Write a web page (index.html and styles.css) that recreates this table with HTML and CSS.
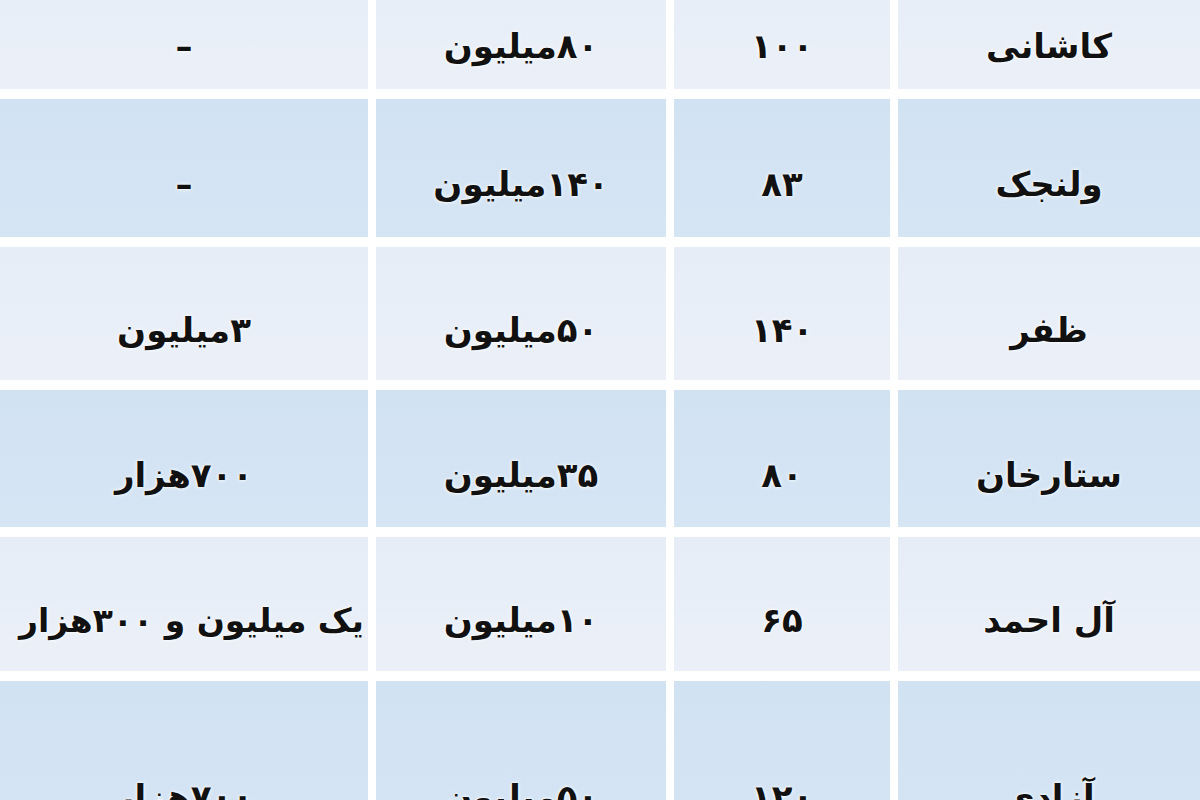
FILE: index.html
```html
<!DOCTYPE html>
<html lang="fa" dir="rtl">
<head>
<meta charset="utf-8">
<title>جدول</title>
<link rel="stylesheet" href="styles.css">
</head>
<body>
<div class="table">
  <div class="cell light r1">کاشانی</div>
  <div class="cell light r1">۱۰۰</div>
  <div class="cell light r1">۸۰میلیون</div>
  <div class="cell light r1">–</div>

  <div class="cell dark">ولنجک</div>
  <div class="cell dark">۸۳</div>
  <div class="cell dark">۱۴۰میلیون</div>
  <div class="cell dark">–</div>

  <div class="cell light">ظفر</div>
  <div class="cell light">۱۴۰</div>
  <div class="cell light">۵۰میلیون</div>
  <div class="cell light">۳میلیون</div>

  <div class="cell dark">ستارخان</div>
  <div class="cell dark">۸۰</div>
  <div class="cell dark">۳۵میلیون</div>
  <div class="cell dark">۷۰۰هزار</div>

  <div class="cell light">آل احمد</div>
  <div class="cell light">۶۵</div>
  <div class="cell light">۱۰میلیون</div>
  <div class="cell light wide">یک میلیون و ۳۰۰هزار</div>

  <div class="cell dark">آزادی</div>
  <div class="cell dark">۱۲۰</div>
  <div class="cell dark">۵۰میلیون</div>
  <div class="cell dark">۷۰۰هزار</div>
</div>
</body>
</html>
```

FILE: styles.css
```css
html, body {
  margin: 0;
  padding: 0;
  background: #ffffff;
  overflow: hidden;
}

.table {
  direction: rtl;
  display: grid;
  grid-template-columns: 302px 216px 290px 368px;
  grid-template-rows: 133px 138px 133px 137px 134px 200px;
  column-gap: 8px;
  row-gap: 10px;
  width: 1200px;
  margin-top: -44px;
}

.cell {
  display: flex;
  align-items: center;
  justify-content: center;
  padding-top: 32px;
  box-sizing: border-box;
  font-family: "DejaVu Sans", sans-serif;
  font-weight: bold;
  font-size: 34px;
  color: #111111;
  white-space: nowrap;
  overflow: hidden;
  text-shadow: 0 0 2px #ffffff, 0 0 4px #ffffff;
}

.r1 {
  padding-top: 46px;
}

.light {
  background: linear-gradient(to bottom, #e6edf7, #ebf0f8);
}

.dark {
  background: linear-gradient(to bottom, #d1e2f3, #d6e5f4);
}

.wide {
  justify-content: flex-start;
  padding-right: 4px;
  font-size: 33px;
}
```
